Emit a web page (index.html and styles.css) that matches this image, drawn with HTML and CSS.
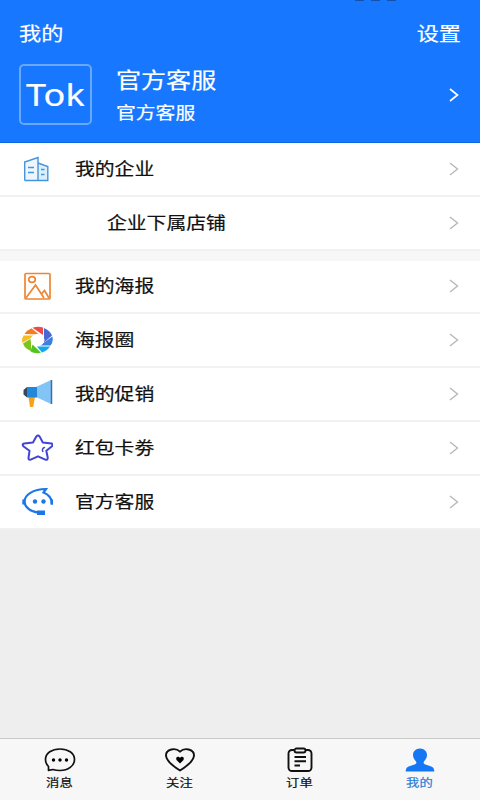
FILE: index.html
```html
<!DOCTYPE html>
<html lang="zh-CN">
<head>
<meta charset="utf-8">
<title>我的</title>
<link rel="stylesheet" href="styles.css">
</head>
<body>
<div class="app">
  <header class="header">
    <div class="status"><i></i><i></i><i></i></div>
    <div class="bar"><span class="wide title">我的</span><span class="wide title right">设置</span></div>
    <div class="profile">
      <div class="avatar"><span>Tok</span></div>
      <div class="who"><span class="wide name">官方客服</span><span class="wide sub">官方客服</span></div>
      <svg class="chev light" viewBox="0 0 10 14"><path d="M1 1l7.5 6L1 13"/></svg>
    </div>
  </header>
  <main>
    <section class="group first">
      <div class="row">
        <svg class="icon" viewBox="0 0 32 32"><path d="M3.700 27.500V9L17 4.500v23z" fill="#edf6fc"/><path d="M17 10l9.800 3.500v14H17z" fill="#d9effc"/><path d="M3.700 27.500V9L17 4.500v23M17 10l9.800 3.500v14H3.700M7 14.500h6M7 19.500h6M20 16.500h3.500M20 21.500h3.500" fill="none" stroke="#4594dc" stroke-width="1.400"/></svg>
        <span class="wide">我的企业</span><svg class="chev" viewBox="0 0 10 14"><path d="M1 1l7.500 6L1 13"/></svg>
      </div>
      <div class="row child"><span class="wide">企业下属店铺</span><svg class="chev" viewBox="0 0 10 14"><path d="M1 1l7.500 6L1 13"/></svg></div>
    </section>
    <section class="group">
      <div class="row">
        <svg class="icon" viewBox="0 0 32 32" fill="none" stroke="#ef8632" stroke-width="1.700"><rect x="4" y="3.500" width="25" height="25.500" rx="1"/><ellipse cx="11" cy="9.500" rx="3.300" ry="2.800"/><path d="M5 28l9.500-13L23 28M20.500 24l3-3.500L28 28"/></svg>
        <span class="wide">我的海报</span><svg class="chev" viewBox="0 0 10 14"><path d="M1 1l7.500 6L1 13"/></svg>
      </div>
      <div class="row">
        <svg class="icon" viewBox="0 0 32 32"><path d="M11.500 3.800Q17 1.800 22 3.500V11z" fill="#ed4b45"/><path d="M23 4Q29 6.500 31 11.500L23 18.500z" fill="#4b68d9"/><path d="M31.300 12.500Q32.800 17.500 29.500 21.500H19z" fill="#3b7fe2"/><path d="M16 22.500H29Q26 27 21 28.500z" fill="#13a8ee"/><path d="M11.500 20.500L20 28.800Q14 30 9.500 27.500z" fill="#50c51b"/><path d="M10 14.500V27Q3.500 24.500 2 19.500z" fill="#79c51e"/><path d="M2.500 11.500H14L1.200 19Q.5 14.500 2.500 11.500z" fill="#f5bd1f"/><path d="M3.500 10Q6 6 10.500 4.200L18 10.500z" fill="#f57c1c"/><ellipse cx="16.500" cy="16" rx="7" ry="6" fill="#fff"/></svg>
        <span class="wide">海报圈</span><svg class="chev" viewBox="0 0 10 14"><path d="M1 1l7.500 6L1 13"/></svg>
      </div>
      <div class="row">
        <svg class="icon" viewBox="0 0 32 32"><path d="M7.500 19H14l-1.800 10H9z" fill="#f6a31b"/><path d="M15 9L30 2v24L15 19z" fill="#82c4f6"/><path d="M6 9h10V19.500H6z" fill="#2187d8"/><path d="M6 9L2.500 12v4.500L6 19.500z" fill="#33485d"/><path d="M30.500 2v24" stroke="#416f9f" stroke-width="1.500"/></svg>
        <span class="wide">我的促销</span><svg class="chev" viewBox="0 0 10 14"><path d="M1 1l7.500 6L1 13"/></svg>
      </div>
      <div class="row">
        <svg class="icon" viewBox="0 0 32 32" fill="none" stroke="#4045d4" stroke-width="2" stroke-linejoin="round" stroke-linecap="round"><path d="M15.300 4.600Q17 2.500 18.700 4.600L21.800 10.500L30.500 11.500Q32.300 12.400 31 14.200L25.300 18.800L26.800 26Q26.500 28.500 24.300 27.600L17 24.300L9.700 27.600Q7.300 28.300 7.500 26L8.500 18.800L2.300 14.200Q.8 12 3.200 11.500L12 10.500z"/><path d="M23.500 15.500q-3 1-1.700 4" stroke-width="1.500"/></svg>
        <span class="wide">红包卡劵</span><svg class="chev" viewBox="0 0 10 14"><path d="M1 1l7.500 6L1 13"/></svg>
      </div>
      <div class="row">
        <svg class="icon" viewBox="0 0 32 32" fill="none" stroke="#1b76ea" stroke-width="2.200"><path d="M17.500 26.500C9 26 3.500 20.500 3.500 15.500C3.500 9 12 3 25 3L22.500 6.500C27.500 8.500 31 12 31 18.500"/><path d="M2.800 13.500v5M31 13.500v5" stroke-width="3"/><rect x="16" y="24.500" width="8" height="4.500" fill="#1b76ea" stroke="none"/><circle cx="14" cy="15.500" r="2.200" fill="#1b76ea" stroke="none"/><circle cx="22.500" cy="15.500" r="2.200" fill="#1b76ea" stroke="none"/></svg>
        <span class="wide">官方客服</span><svg class="chev" viewBox="0 0 10 14"><path d="M1 1l7.500 6L1 13"/></svg>
      </div>
    </section>
  </main>
  <nav class="tabs">
    <div class="tab"><svg viewBox="0 0 32 26"><path d="M4.500 19.500Q1.500 16.500 1.500 12.500C1.500 6 8 2 16 2s14.500 4 14.500 10.500S24 23.500 16 23.500q-4 0-7-1l-4.500.8z" fill="none" stroke="#111" stroke-width="1.700" stroke-linejoin="round"/><circle cx="9.500" cy="13" r="1.700"/><circle cx="16" cy="13" r="1.700"/><circle cx="22.500" cy="13" r="1.700"/></svg><span>消息</span></div>
    <div class="tab"><svg viewBox="0 0 32 26"><path d="M16 23.500C12 21 2 14.500 2 8.300C2 2 11.500.2 16 4.700C20.500.2 30 2 30 8.300C30 14.500 20 21 16 23.500z" fill="none" stroke="#111" stroke-width="1.900"/><path d="M16 16.500L12.500 13C11 9.500 15 9 16 11C17 9 21 9.500 19.500 13z"/></svg><span>关注</span></div>
    <div class="tab"><svg viewBox="0 0 32 26" fill="none" stroke="#111" stroke-width="1.900"><rect x="4.500" y="3" width="23" height="21" rx="3.500"/><rect x="10.500" y="1.500" width="11" height="4" rx="2" fill="#f7f7f7"/><path d="M10.500 10h11.500M10.500 14.200h11.500M10.500 18.500h5.500"/></svg><span>订单</span></div>
    <div class="tab active"><svg viewBox="0 0 32 26"><path d="M16 1.500c-4.500 0-7 3-7 6.700 0 3 2 4.800 3.200 6.500.6 2-.5 2.400-3 3.200C4.500 19.200 1.700 19.800 1.700 24.500h28.600c0-4.700-2.800-5.300-7.500-6.600-2.500-.8-3.600-1.200-3-3.200C21 13 23 11.200 23 8.200c0-3.700-2.500-6.700-7-6.700z" fill="#1677f5"/></svg><span>我的</span></div>
  </nav>
</div>
</body>
</html>
```
FILE: styles.css
```css
* { box-sizing: border-box; }
body { margin: 0; font-family: Roboto, "Noto Sans CJK SC", sans-serif; color: #111; -webkit-text-stroke: .2px; }
.app { width: 480px; height: 800px; display: flex; flex-direction: column; background: #eee; overflow: hidden; }
.header { height: 143px; flex: none; background: #1777ff; border-bottom: 1px solid #0c68e2; color: #fff; }
.status { height: 14px; padding-left: 355px; display: flex; gap: 7px; }
.status i { width: 9px; height: 1px; background: #174fab; }
.bar { height: 41px; padding: 0 19px; display: flex; justify-content: space-between; align-items: center; }
.wide { display: inline-block; white-space: nowrap; font-size: 17px; line-height: 24px; transform: scaleX(1.165); transform-origin: left center; }
.title { font-size: 19px; }
.right { transform-origin: right center; }
.profile { display: flex; align-items: center; height: 79px; padding: 0 21px 0 19px; }
.avatar { width: 73px; height: 61px; border: 2px solid #69a8ff; border-radius: 5px; display: flex; align-items: center; justify-content: center; font: 30px/40px "Noto Sans", sans-serif; }
.avatar span { transform: scaleX(1.2); }
.who { flex: 1; margin-left: 24px; padding-top: 2px; display: flex; flex-direction: column; align-items: flex-start; }
.name { font-size: 21.500px; line-height: 34px; }
.sub { line-height: 30px; }
.chev { width: 10px; height: 14px; margin-left: auto; fill: none; stroke: #b8b8b8; stroke-width: 1.400; }
.chev.light { stroke: #fff; stroke-width: 1.700; }
.group { background: #fff; }
.first { border-bottom: 10px solid #f7f7f7; }
.row { height: 53.800px; padding: 0 21px 0 20.500px; display: flex; align-items: center; border-bottom: 2px solid #f1f1f1; }
.icon { width: 32px; height: 32px; margin-right: 22.500px; }
.child { padding-left: 107px; }
.tabs { height: 62px; margin-top: auto; flex: none; background: #f7f7f7; border-top: 1px solid #c9c9c9; display: grid; grid-template-columns: repeat(4, 1fr); }
.tab { display: flex; flex-direction: column; align-items: center; padding: 8px 1px 0 0; font-size: 11.400px; }
.tab svg { width: 32px; height: 26px; }
.tab span { line-height: 20px; transform: scaleX(1.165); }
.active { color: #2a7fd5; }
```
